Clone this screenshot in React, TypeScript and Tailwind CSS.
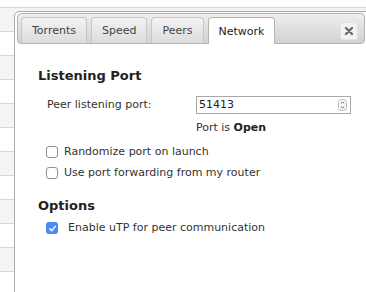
import type { FC } from "react";

const tabs = ["Torrents", "Speed", "Peers", "Network"];

const Checkbox: FC<{ checked?: boolean }> = ({ checked }) => {
  if (checked) {
    return (
      <div className="w-[12px] h-[12px] rounded-[3px] bg-[#4a8cf6] flex items-center justify-center shrink-0">
        <svg width="9" height="9" viewBox="0 0 10 10" fill="none">
          <path d="M2 5.2 L4.2 7.4 L8.2 2.6" stroke="white" strokeWidth="1.6" strokeLinecap="round" strokeLinejoin="round" />
        </svg>
      </div>
    );
  }
  return <div className="w-[12px] h-[12px] rounded-[3px] border border-[#8f8f8f] bg-white shrink-0" />;
};

const App: FC = () => {
  return (
    <div
      className="relative w-[366px] h-[292px] overflow-hidden bg-white text-[#222]"
      style={{ fontFamily: '"DejaVu Sans", Verdana, sans-serif' }}
    >
      {/* background table behind the dialog */}
      <div className="pt-[7px]">
        <div className="border-t border-[#d6d6d6]">
          {Array.from({ length: 12 }).map((_, i) => (
            <div
              key={i}
              className={`h-[24px] border-b border-[#d6d6d6] ${i % 2 === 0 ? "bg-[#f4f4f4]" : "bg-white"}`}
            />
          ))}
        </div>
      </div>

      {/* preferences dialog */}
      <div className="absolute left-[14px] top-[11px] right-[-1px] bottom-[-10px] bg-white border border-[#a9a9a9] rounded-tl-[5px]">
        <div className="ml-[2px] mt-[1px] mr-[1px] h-[31px] rounded-[4px] border border-[#b4b4b4] bg-gradient-to-b from-[#eeeeee] to-[#d2d2d2] flex items-end pl-[3px] relative">
          <div className="flex items-end gap-[4px]">
            {tabs.map((t) => {
              const active = t === "Network";
              return (
                <div
                  key={t}
                  className={`px-[10px] pt-[2px] flex items-center text-[11px] rounded-t-[4px] border border-b-0 ${
                    active
                      ? "bg-white border-[#b4b4b4] text-[#222] mb-[-1px] h-[27px]"
                      : "h-[26px] bg-gradient-to-b from-[#f3f3f3] to-[#dcdcdc] border-[#c6c6c6] text-[#444]"
                  }`}
                >
                  {t}
                </div>
              );
            })}
          </div>
          <div className="absolute right-[6px] top-[8px] w-[18px] h-[18px] rounded-[3px] bg-[#f2f2f2] border border-[#e2e2e2] flex items-center justify-center">
            <svg width="10" height="10" viewBox="0 0 10 10">
              <path d="M2 2 L8 8 M8 2 L2 8" stroke="#6a6a6a" strokeWidth="2.4" strokeLinecap="round" />
            </svg>
          </div>
        </div>

        <div className="pl-[23px]">
          <div className="mt-[24px] text-[13px] leading-[16px] font-bold">Listening Port</div>

          <div className="mt-[12px] flex items-center h-[18px]">
            <div className="w-[158px] pl-[9px] text-[11px] leading-[14px] text-[#333]">Peer listening port:</div>
            <div className="w-[155px] h-[18px] border border-[#a8a8a8] bg-white flex items-center justify-between pl-[2px] pr-[3px]">
              <span className="text-[11px] leading-[14px] text-[#222]">51413</span>
              <svg width="9" height="12" viewBox="0 0 9 12">
                <rect x="0.5" y="0.5" width="8" height="11" rx="3" fill="#fafafa" stroke="#b9b9b9" />
                <path d="M2.8 4.5 L4.5 3 L6.2 4.5" stroke="#555" strokeWidth="0.9" fill="none" />
                <path d="M2.8 7.5 L4.5 9 L6.2 7.5" stroke="#555" strokeWidth="0.9" fill="none" />
              </svg>
            </div>
          </div>

          <div className="mt-[7px] pl-[158px] text-[11px] leading-[14px] text-[#333]">
            Port is <span className="font-bold text-[#222]">Open</span>
          </div>

          <div className="mt-[10px] pl-[8px] flex items-center gap-[6px] h-[14px]">
            <Checkbox />
            <span className="text-[11px] leading-[14px] text-[#333]">Randomize port on launch</span>
          </div>

          <div className="mt-[7px] pl-[8px] flex items-center gap-[6px] h-[14px]">
            <Checkbox />
            <span className="text-[11px] leading-[14px] text-[#333]">Use port forwarding from my router</span>
          </div>

          <div className="mt-[18px] text-[13px] leading-[16px] font-bold">Options</div>

          <div className="mt-[7px] pl-[8px] flex items-center gap-[10px] h-[14px]">
            <Checkbox checked />
            <span className="text-[11px] leading-[14px] text-[#333]">Enable uTP for peer communication</span>
          </div>
        </div>
      </div>
    </div>
  );
};

export default App;
